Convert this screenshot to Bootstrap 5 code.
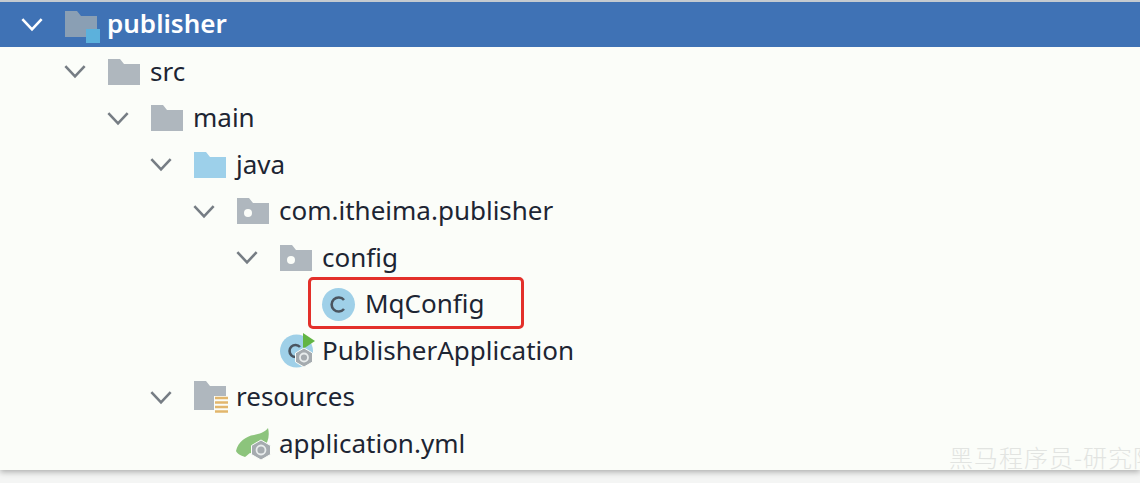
<!DOCTYPE html>
<html lang="en">
<head>
    <meta charset="UTF-8">
    <title>publisher</title>
    <link href="https://cdn.jsdelivr.net/npm/bootstrap@5.3.0/dist/css/bootstrap.min.css" rel="stylesheet">
    <style>
        html, body { height: 100%; background: #f4f5f4; overflow: hidden; }
        .tree-panel {
            position: relative;
            height: 470px;
            padding-top: 2px;
            background: #fbfdf9;
            border-top: 2px solid #c4cad0;
            box-shadow: 0 2px 6px rgba(0, 0, 0, .3);
            font-family: "Noto Sans", sans-serif;
            font-size: 26px;
            color: #1d2533;
        }
        .tree-row { height: 46.5px; }
        .tree-row.selected {
            height: 44.5px;
            margin-top: -2px;
            margin-bottom: 2px;
            background: #3f72b5;
            color: #fff;
            font-weight: 600;
        }
        .indent-0 { padding-left: 11px; }
        .indent-1 { padding-left: 54px; }
        .indent-2 { padding-left: 97px; }
        .indent-3 { padding-left: 140px; }
        .indent-4 { padding-left: 183px; }
        .indent-5 { padding-left: 226px; }
        .indent-6 { padding-left: 269px; }
        .chev { width: 42px; flex: none; color: #767d84; }
        .selected .chev { color: #fff; }
        .chev svg { display: block; margin: 0 auto; }
        .ico { width: 54px; flex: none; padding-left: 12px; }
        .ico svg { display: block; overflow: visible; }
        .ico-low { margin-top: 6px; }
        .label-text { line-height: 1; position: relative; top: -1px; white-space: nowrap; }
        .red-box {
            position: absolute;
            left: 308px;
            top: 275px;
            width: 216px;
            height: 52px;
            border: 3px solid #e3302a;
            border-radius: 5px;
        }
        .watermark {
            position: absolute;
            left: 949px;
            top: 441px;
            font-family: "Noto Sans CJK SC", sans-serif;
            font-size: 24px;
            font-weight: 300;
            line-height: 1.2;
            letter-spacing: 1px;
            color: #e2e4e1;
            white-space: nowrap;
        }
    </style>
</head>
<body>
    <svg width="0" height="0" class="position-absolute">
        <defs>
            <symbol id="chevron" viewBox="0 0 22 14"><path d="M2 2l9 9.500L20 2" fill="none" stroke="currentColor" stroke-width="2.400"/></symbol>
            <path id="folder-shape" d="M0 0h12l4 5h16v21H0z"/>
        </defs>
    </svg>

    <div class="tree-panel">
        <div class="tree-row selected d-flex align-items-center indent-0">
            <div class="chev"><svg width="24" height="15"><use href="#chevron"/></svg></div>
            <div class="ico">
                <svg class="ico-low" width="36" height="32" viewBox="0 0 36 32">
                    <use href="#folder-shape" fill="#8a9fb4"/>
                    <rect x="21" y="18" width="14" height="14" fill="#5cb1dc"/>
                </svg>
            </div>
            <span class="label-text">publisher</span>
        </div>

        <div class="tree-row d-flex align-items-center indent-1">
            <div class="chev"><svg width="24" height="15"><use href="#chevron"/></svg></div>
            <div class="ico"><svg width="32" height="26" viewBox="0 0 32 26"><use href="#folder-shape" fill="#afb7be"/></svg></div>
            <span class="label-text">src</span>
        </div>

        <div class="tree-row d-flex align-items-center indent-2">
            <div class="chev"><svg width="24" height="15"><use href="#chevron"/></svg></div>
            <div class="ico"><svg width="32" height="26" viewBox="0 0 32 26"><use href="#folder-shape" fill="#afb7be"/></svg></div>
            <span class="label-text">main</span>
        </div>

        <div class="tree-row d-flex align-items-center indent-3">
            <div class="chev"><svg width="24" height="15"><use href="#chevron"/></svg></div>
            <div class="ico"><svg width="32" height="26" viewBox="0 0 32 26"><use href="#folder-shape" fill="#9dd0ea"/></svg></div>
            <span class="label-text">java</span>
        </div>

        <div class="tree-row d-flex align-items-center indent-4">
            <div class="chev"><svg width="24" height="15"><use href="#chevron"/></svg></div>
            <div class="ico">
                <svg width="32" height="26" viewBox="0 0 32 26">
                    <use href="#folder-shape" fill="#afb7be"/>
                    <circle cx="11" cy="15" r="4" fill="#fbfdf9"/>
                </svg>
            </div>
            <span class="label-text">com.itheima.publisher</span>
        </div>

        <div class="tree-row d-flex align-items-center indent-5">
            <div class="chev"><svg width="24" height="15"><use href="#chevron"/></svg></div>
            <div class="ico">
                <svg width="32" height="26" viewBox="0 0 32 26">
                    <use href="#folder-shape" fill="#afb7be"/>
                    <circle cx="11" cy="15" r="4" fill="#fbfdf9"/>
                </svg>
            </div>
            <span class="label-text">config</span>
        </div>

        <div class="tree-row d-flex align-items-center indent-6">
            <div class="chev"></div>
            <div class="ico">
                <svg width="33" height="33" viewBox="0 0 33 33">
                    <circle cx="15.500" cy="16.500" r="16.500" fill="#9fd0e8"/>
                    <path d="M21 12a7 7 0 1 0 0 9" fill="none" stroke="#4a5560" stroke-width="2.600"/>
                </svg>
            </div>
            <span class="label-text">MqConfig</span>
        </div>

        <div class="tree-row d-flex align-items-center indent-5">
            <div class="chev"></div>
            <div class="ico">
                <svg width="36" height="35" viewBox="0 0 36 35">
                    <circle cx="16.500" cy="18" r="16.500" fill="#9fd0e8"/>
                    <path d="M20 14a6 6 0 1 0 0 8" fill="none" stroke="#4a5560" stroke-width="2.600"/>
                    <path d="M23 0l12 8-12 8z" fill="#62b543"/>
                    <path d="M24 15l8.500 5v9L24 34l-8.500-5v-9z" fill="#a5abaf" stroke="#fbfdf9" stroke-width="1"/>
                    <circle cx="24" cy="24.500" r="4" fill="none" stroke="#e8ecec" stroke-width="1.800"/>
                </svg>
            </div>
            <span class="label-text">PublisherApplication</span>
        </div>

        <div class="tree-row d-flex align-items-center indent-3">
            <div class="chev"><svg width="24" height="15"><use href="#chevron"/></svg></div>
            <div class="ico">
                <svg width="35" height="33" viewBox="0 0 35 33">
                    <path d="M0 0h12l4 5h16v24H0z" fill="#afb7be"/>
                    <rect x="20" y="15" width="15" height="18" fill="#fbfdf9"/>
                    <path d="M21 17h13M21 21.500h13M21 26h13M21 30.500h13" stroke="#e2b66c" stroke-width="2.500"/>
                </svg>
            </div>
            <span class="label-text">resources</span>
        </div>

        <div class="tree-row d-flex align-items-center indent-4">
            <div class="chev"></div>
            <div class="ico">
                <svg width="36" height="32" viewBox="0 0 36 32">
                    <path d="M-1 23C1 14 9 8 17 7c5-1 11-3 14-7 2 8 0 15-5 20-4 4-9 6-13 5-2 1-3 3-5 4-3-1-8-3-9-6z" fill="#8cc47c"/>
                    <path d="M24 12l9.500 5.500v9L24 32l-9.500-5.500v-9z" fill="#a5abaf" stroke="#fbfdf9" stroke-width="1"/>
                    <circle cx="24" cy="22" r="4.500" fill="none" stroke="#e8ecec" stroke-width="1.800"/>
                </svg>
            </div>
            <span class="label-text">application.yml</span>
        </div>

        <div class="red-box"></div>
        <div class="watermark">黑马程序员-研究院</div>
    </div>

    <script src="https://cdn.jsdelivr.net/npm/bootstrap@5.3.0/dist/js/bootstrap.bundle.min.js"></script>
</body>
</html>
